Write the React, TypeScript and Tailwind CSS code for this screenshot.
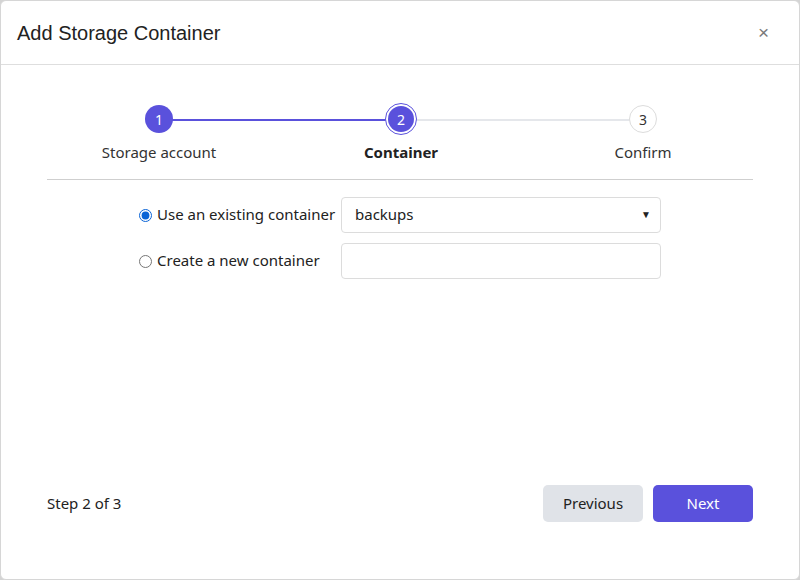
import { useState } from "react";

const STEPS = ["Storage account", "Container", "Confirm"];

export default function App() {
    const [mode, setMode] = useState<"existing" | "new">("existing");
    const current = 2;

    return (
        <div className="h-[580px] w-[800px] bg-[#d4d4d4]">
            <div className="flex h-full flex-col rounded-[6px] border border-[#d6d6d6] bg-white font-['Noto_Sans',sans-serif] text-[#222]">
                {/* Header */}
                <div className="flex h-[64px] shrink-0 items-center justify-between border-b border-[#dedede] pl-[16px] pr-[30px]">
                    <h1 className="font-['Liberation_Sans',Arial,sans-serif] text-[20px] text-[#222]">Add Storage Container</h1>
                    <button className="font-['Liberation_Sans',Arial,sans-serif] text-[19px] leading-none text-[#7a7a7a]">×</button>
                </div>

                {/* Stepper */}
                <div className="mx-[46px] mt-[40px] border-b border-[#cfcfcf] pb-[15px]">
                    <div className="relative mx-auto flex w-[726px] -translate-x-[9px]">
                        <div className="absolute left-[121px] top-[14px] h-[2px] w-[242px] bg-[#5a51dc]" />
                        <div className="absolute left-[363px] top-[14px] h-[2px] w-[242px] bg-[#e5e7eb]" />
                        {STEPS.map((label, i) => {
                            const n = i + 1;
                            return (
                                <div key={label} className="relative flex w-[242px] flex-col items-center">
                                    {n < current && (
                                        <div className="flex h-[28px] w-[28px] items-center justify-center rounded-full bg-[#5a51dc] text-[14px] text-white">{n}</div>
                                    )}
                                    {n === current && (
                                        <div className="-my-[2px] flex h-[32px] w-[32px] items-center justify-center rounded-full border-[1.5px] border-[#5a51dc] bg-white">
                                            <div className="flex h-[26px] w-[26px] items-center justify-center rounded-full bg-[#5a51dc] text-[14px] text-white">{n}</div>
                                        </div>
                                    )}
                                    {n > current && (
                                        <div className="flex h-[28px] w-[28px] items-center justify-center rounded-full border border-[#dcdcdc] bg-white text-[14px] text-[#333]">{n}</div>
                                    )}
                                    <span className={`mt-[8px] text-[15px] ${n === current ? "font-bold text-[#222]" : "text-[#333]"}`}>{label}</span>
                                </div>
                            );
                        })}
                    </div>
                </div>

                {/* Form */}
                <div className="mx-auto mt-[17px] grid w-[522px] grid-cols-[202px_320px] gap-y-[10px] text-[15px] text-[#222]">
                    <label className="flex items-center gap-[5px]">
                        <input
                            type="radio"
                            name="mode"
                            checked={mode === "existing"}
                            onChange={() => setMode("existing")}
                            className="h-[13px] w-[13px] translate-y-[1px] accent-[#0a64d6]"
                        />
                        Use an existing container
                    </label>
                    <div className="flex h-[36px] items-center justify-between rounded-[4px] border border-[#dcdcdc] pl-[13px] pr-[9px]">
                        <span>backups</span>
                        <span className="text-[10px] text-[#222]">▼</span>
                    </div>
                    <label className="flex items-center gap-[5px]">
                        <input
                            type="radio"
                            name="mode"
                            checked={mode === "new"}
                            onChange={() => setMode("new")}
                            className="h-[13px] w-[13px] translate-y-[1px] accent-[#0a64d6]"
                        />
                        Create a new container
                    </label>
                    <input type="text" className="h-[36px] rounded-[4px] border border-[#dcdcdc] px-[13px] outline-none" />
                </div>

                {/* Footer */}
                <div className="mt-auto mb-[57px] flex items-center justify-between px-[46px]">
                    <span className="text-[15px] text-[#222]">Step 2 of 3</span>
                    <div className="flex gap-[10px]">
                        <button className="h-[37px] w-[100px] rounded-[5px] bg-[#e0e3e8] text-[15px] text-[#222]">Previous</button>
                        <button className="h-[37px] w-[100px] rounded-[5px] bg-[#5a51dc] text-[15px] text-white">Next</button>
                    </div>
                </div>
            </div>
        </div>
    );
}
